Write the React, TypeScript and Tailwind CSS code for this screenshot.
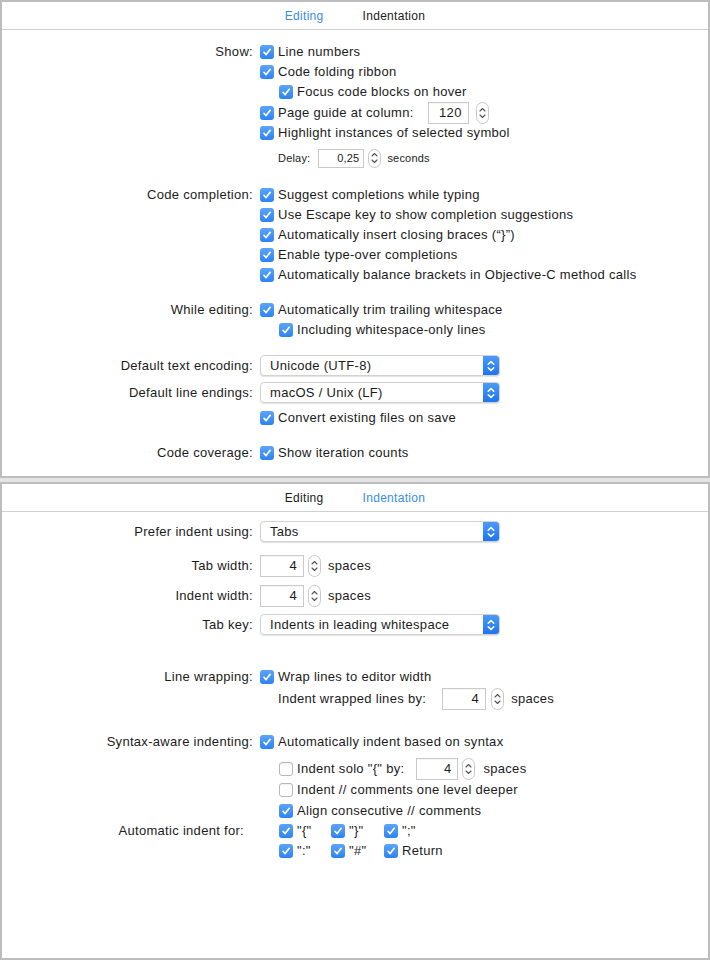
import type { ReactNode } from 'react'

const font = { fontFamily: '"Liberation Sans", Arial, sans-serif' }

function Check({ on = true }: { on?: boolean }) {
  if (!on)
    return <span className="w-[14px] h-[14px] shrink-0 rounded-[3px] border border-[#b8b8b8] bg-white shadow-[inset_0_1px_1px_rgba(0,0,0,0.05)]" />
  return (
    <span className="w-[14px] h-[14px] shrink-0 rounded-[3px] bg-gradient-to-b from-[#5ba4f9] to-[#2c83f4] flex items-center justify-center">
      <svg width="10" height="10" viewBox="0 0 10 10">
        <path d="M2 5.3 L4.1 7.6 L8.2 2.3" fill="none" stroke="white" strokeWidth="1.7" strokeLinecap="round" strokeLinejoin="round" />
      </svg>
    </span>
  )
}

function Box({ label, on = true }: { label: string; on?: boolean }) {
  return (
    <div className="flex items-center">
      <Check on={on} />
      <span className="ml-[4px] whitespace-nowrap">{label}</span>
    </div>
  )
}

function Stepper({ h = 22 }: { h?: number }) {
  return (
    <span className={`w-[13px] shrink-0 rounded-[7px] border border-[#c9c9c9] bg-white flex items-center justify-center ${h === 22 ? 'h-[22px]' : 'h-[19px]'}`}>
      <svg width="9" height="16" viewBox="0 0 9 16">
        <path d="M2 6 L4.5 3.5 L7 6" fill="none" stroke="#555" strokeWidth="1.1" strokeLinecap="round" strokeLinejoin="round" />
        <path d="M2 10 L4.5 12.5 L7 10" fill="none" stroke="#555" strokeWidth="1.1" strokeLinecap="round" strokeLinejoin="round" />
      </svg>
    </span>
  )
}

function Field({ value, w }: { value: string; w: string }) {
  return (
    <span className={`${w} h-[22px] border border-[#cacaca] bg-white flex items-center justify-end pr-[6px] shadow-[inset_0_1px_0_rgba(0,0,0,0.04)]`}>
      {value}
    </span>
  )
}

function Popup({ value }: { value: string }) {
  return (
    <div className="w-[240px] h-[21px] rounded-[4px] bg-white border border-[#d2d2d2] shadow-[0_1px_1px_rgba(0,0,0,0.12)] flex items-center overflow-hidden">
      <span className="flex-1 pl-[9px] whitespace-nowrap">{value}</span>
      <span className="w-[16px] h-full bg-gradient-to-b from-[#4b9bf9] to-[#1e74f0] flex items-center justify-center">
        <svg width="10" height="14" viewBox="0 0 10 14">
          <path d="M2.2 5.2 L5 2.6 L7.8 5.2" fill="none" stroke="white" strokeWidth="1.5" strokeLinecap="round" strokeLinejoin="round" />
          <path d="M2.2 8.8 L5 11.4 L7.8 8.8" fill="none" stroke="white" strokeWidth="1.5" strokeLinecap="round" strokeLinejoin="round" />
        </svg>
      </span>
    </div>
  )
}

function Row({ label, mt = '', h = 'h-[20px]', children }: { label?: string; mt?: string; h?: string; children: ReactNode }) {
  return (
    <div className={`flex items-center ${h} ${mt}`}>
      <div className="w-[251px] shrink-0 text-right whitespace-nowrap">{label}</div>
      <div className="ml-[7px] flex items-center">{children}</div>
    </div>
  )
}

function Tabs({ active }: { active: 'Editing' | 'Indentation' }) {
  return (
    <div className="h-[28px] border-b border-[#d0d0d0] flex items-center justify-center gap-[39px] text-[12px]">
      <span className={active === 'Editing' ? 'text-[#3a8de3]' : 'text-[#1b1b1b]'}>Editing</span>
      <span className={active === 'Indentation' ? 'text-[#3a8de3]' : 'text-[#1b1b1b]'}>Indentation</span>
    </div>
  )
}

export default function App() {
  return (
    <div style={font} className="w-[710px] h-[960px] bg-[#e4e4e4] text-[13px] tracking-[0.3px] text-[#1c1c1c] flex flex-col gap-[4px]">
      {/* Editing */}
      <div className="h-[478px] bg-white border-2 border-[#bdbdbd] flex flex-col">
        <Tabs active="Editing" />
        <Row label="Show:" mt="mt-[12px]"><Box label="Line numbers" /></Row>
        <Row><Box label="Code folding ribbon" /></Row>
        <Row><div className="pl-[19px]"><Box label="Focus code blocks on hover" /></div></Row>
        <Row h="h-[21px]">
          <Box label="Page guide at column:" />
          <span className="ml-[14px]"><Field value="120" w="w-[41px]" /></span>
          <span className="ml-[7px]"><Stepper /></span>
        </Row>
        <Row><Box label="Highlight instances of selected symbol" /></Row>
        <Row mt="mt-[5px]">
          <div className="pl-[18px] flex items-center text-[11px] tracking-[0.2px]">
            <span>Delay:</span>
            <span className="ml-[8px] w-[46px] h-[19px] border border-[#cacaca] flex items-center justify-end pr-[4px]">0,25</span>
            <span className="ml-[4px]"><Stepper h={19} /></span>
            <span className="ml-[6px]">seconds</span>
          </div>
        </Row>
        <Row label="Code completion:" mt="mt-[17px]"><Box label="Suggest completions while typing" /></Row>
        <Row><Box label="Use Escape key to show completion suggestions" /></Row>
        <Row><Box label="Automatically insert closing braces (“}”)" /></Row>
        <Row><Box label="Enable type-over completions" /></Row>
        <Row><Box label="Automatically balance brackets in Objective-C method calls" /></Row>
        <Row label="While editing:" mt="mt-[15px]"><Box label="Automatically trim trailing whitespace" /></Row>
        <Row><div className="pl-[19px]"><Box label="Including whitespace-only lines" /></div></Row>
        <Row label="Default text encoding:" mt="mt-[15px]" h="h-[21px]"><Popup value="Unicode (UTF-8)" /></Row>
        <Row label="Default line endings:" mt="mt-[6px]" h="h-[21px]"><Popup value="macOS / Unix (LF)" /></Row>
        <Row mt="mt-[5px]"><Box label="Convert existing files on save" /></Row>
        <Row label="Code coverage:" mt="mt-[15px]"><Box label="Show iteration counts" /></Row>
      </div>

      {/* Indentation */}
      <div className="h-[478px] bg-white border-2 border-[#bdbdbd] flex flex-col">
        <Tabs active="Indentation" />
        <Row label="Prefer indent using:" mt="mt-[9px]" h="h-[21px]"><Popup value="Tabs" /></Row>
        <Row label="Tab width:" mt="mt-[13px]" h="h-[22px]">
          <Field value="4" w="w-[44px]" />
          <span className="ml-[4px]"><Stepper /></span>
          <span className="ml-[7px]">spaces</span>
        </Row>
        <Row label="Indent width:" mt="mt-[8px]" h="h-[22px]">
          <Field value="4" w="w-[44px]" />
          <span className="ml-[4px]"><Stepper /></span>
          <span className="ml-[7px]">spaces</span>
        </Row>
        <Row label="Tab key:" mt="mt-[7px]" h="h-[21px]"><Popup value="Indents in leading whitespace" /></Row>
        <Row label="Line wrapping:" mt="mt-[32px]"><Box label="Wrap lines to editor width" /></Row>
        <Row mt="mt-[1px]" h="h-[22px]">
          <div className="pl-[18px] flex items-center">
            <span className="whitespace-nowrap">Indent wrapped lines by:</span>
            <span className="ml-[16px]"><Field value="4" w="w-[44px]" /></span>
            <span className="ml-[5px]"><Stepper /></span>
            <span className="ml-[7px]">spaces</span>
          </div>
        </Row>
        <Row label="Syntax-aware indenting:" mt="mt-[22px]"><Box label="Automatically indent based on syntax" /></Row>
        <Row mt="mt-[6px]" h="h-[22px]">
          <div className="pl-[19px] flex items-center">
            <Box label={'Indent solo "{" by:'} on={false} />
            <span className="ml-[12px]"><Field value="4" w="w-[42px]" /></span>
            <span className="ml-[4px]"><Stepper /></span>
            <span className="ml-[8px]">spaces</span>
          </div>
        </Row>
        <Row><div className="pl-[19px]"><Box label="Indent // comments one level deeper" on={false} /></div></Row>
        <Row mt="mt-[1px]"><div className="pl-[19px]"><Box label="Align consecutive // comments" /></div></Row>
        <div className="flex">
          <div className="w-[242px] shrink-0 text-right h-[20px] flex items-center justify-end whitespace-nowrap">Automatic indent for:</div>
          <div className="ml-[35px] grid grid-cols-[52px_53px_auto]">
            {['"{"', '"}"', '";"', '":"', '"#"', 'Return'].map(l => (
              <div key={l} className="h-[20px] flex items-center"><Box label={l} /></div>
            ))}
          </div>
        </div>
      </div>
    </div>
  )
}
